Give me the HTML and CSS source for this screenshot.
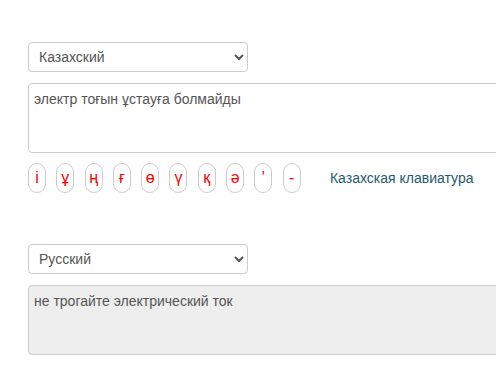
FILE: index.html
```html
<!DOCTYPE html>
<html lang="ru">

<head>
    <meta charset="UTF-8">
    <meta name="viewport" content="width=device-width, initial-scale=1.0">
    <title>Переводчик</title>

    <link rel="stylesheet" href="styles.css">
</head>

<body>
    <div class="wrap">
        <select class="lang">
            <option>Казахский</option>
            <option>Русский</option>
        </select>
        <textarea class="text">электр тоғын ұстауға болмайды</textarea>

        <div class="keys">
            <button>і</button>
            <button>ұ</button>
            <button>ң</button>
            <button>ғ</button>
            <button>ө</button>
            <button>ү</button>
            <button>қ</button>
            <button>ә</button>
            <button>'</button>
            <button>-</button>
            <span class="keys-label">Казахская клавиатура</span>
        </div>

        <select class="lang second">
            <option>Русский</option>
            <option>Казахский</option>
        </select>
        <textarea class="text result" readonly>не трогайте электрический ток</textarea>
    </div>
</body>

</html>
```

FILE: styles.css
```css
html,
body {
    margin: 0;
    overflow: hidden;
    background-color: #fff;
}

body {
    font-family: "Liberation Sans", Arial, sans-serif;
    font-size: 14px;
    color: #555;
}

.wrap {
    display: flex;
    flex-direction: column;
    align-items: flex-start;
    padding: 42px 0 0 28px;
}

.lang {
    box-sizing: border-box;
    width: 220px;
    height: 30px;
    padding: 0 6px;
    border: 1px solid #ccc;
    border-radius: 4px;
    background-color: #fff;
    font-family: inherit;
    font-size: 14px;
    color: #555;
    outline: none;
}

.second {
    margin-top: 51px;
}

.text {
    box-sizing: border-box;
    width: 490px;
    height: 70px;
    margin-top: 11px;
    padding: 5px 5px;
    border: 1px solid #ccc;
    border-radius: 4px;
    font-family: inherit;
    font-size: 14px;
    line-height: 20px;
    color: #555;
    resize: none;
    outline: none;
}

.result {
    background-color: #eee;
}

.keys {
    display: flex;
    align-items: center;
    gap: 10.3px;
    margin-top: 10px;
}

.keys button {
    box-sizing: border-box;
    width: 18px;
    height: 30px;
    padding: 0;
    border: 1px solid #ccc;
    border-radius: 9px;
    background-color: #fff;
    font-family: inherit;
    font-size: 16px;
    color: #f00;
    outline: none;
}

.keys-label {
    margin-left: 19px;
    font-size: 14px;
    color: #1f5a6e;
}
```
